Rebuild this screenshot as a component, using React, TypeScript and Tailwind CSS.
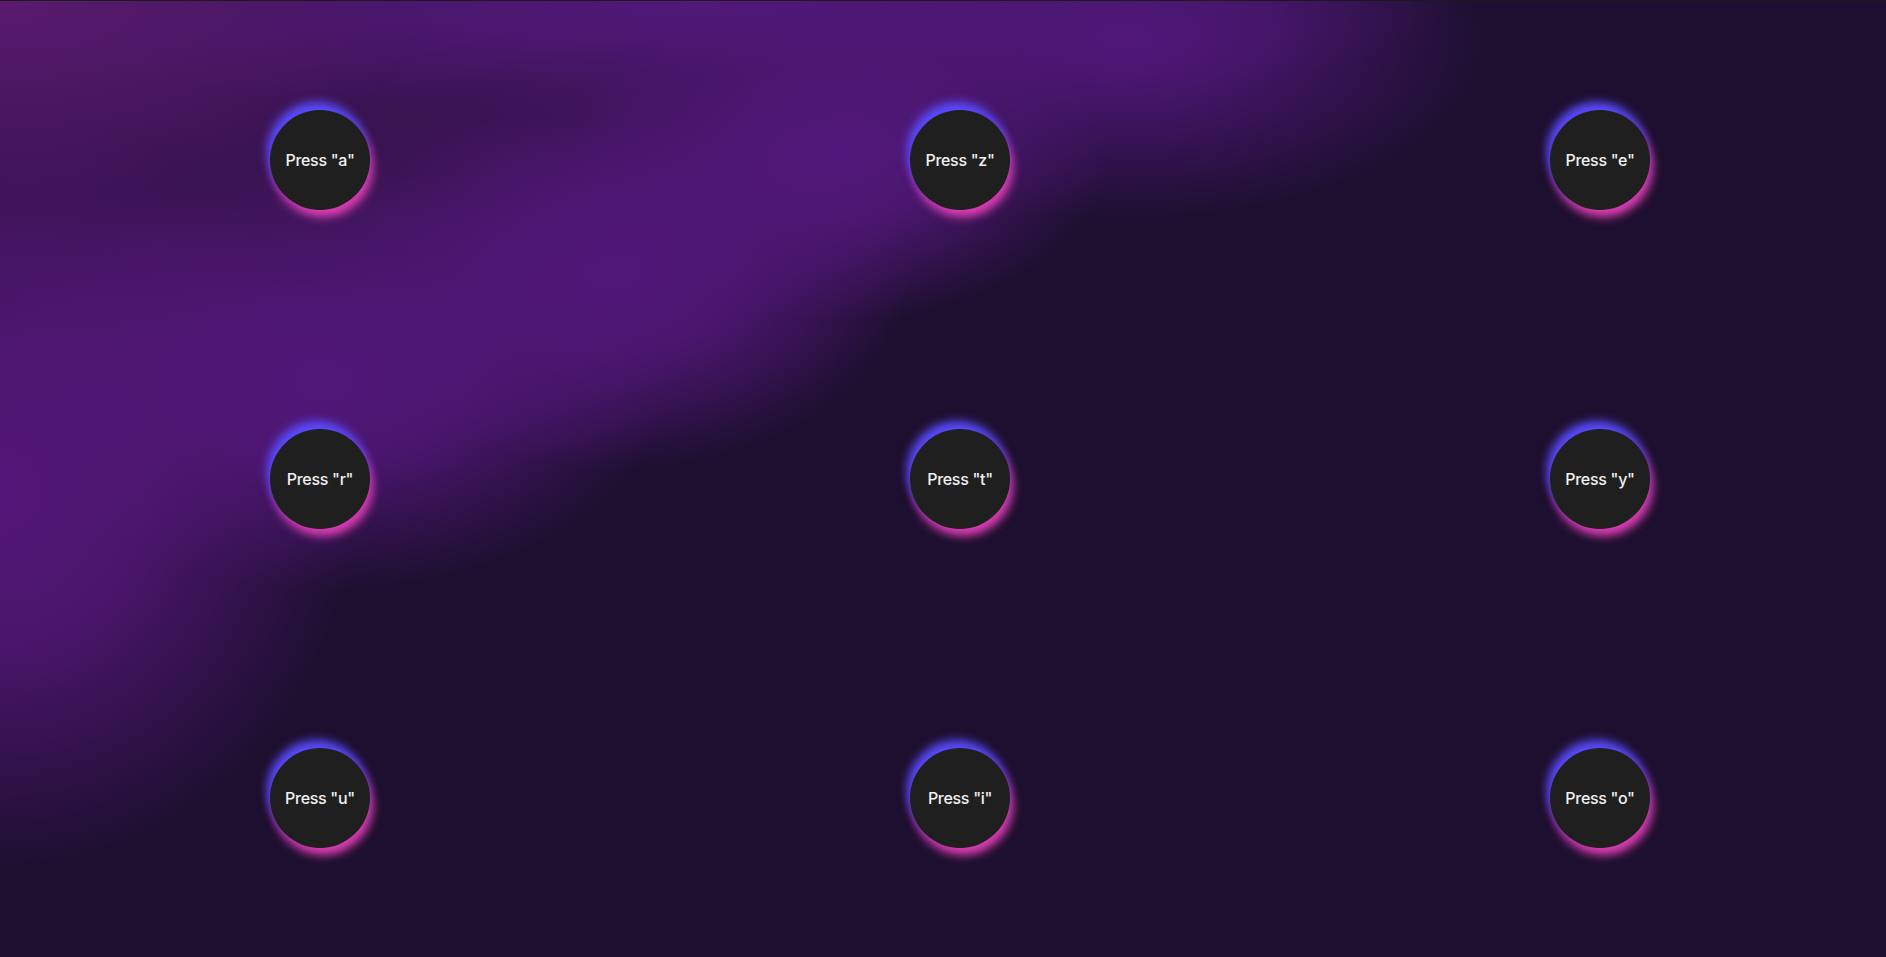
const keys = ['a', 'z', 'e', 'r', 't', 'y', 'u', 'i', 'o'];

function KeyPad({ k }: { k: string }) {
  return (
    <div className="flex items-center justify-center">
      <button className="size-[100px] rounded-full bg-[#1f1f1f] text-[#f2f2f2] text-[16px] font-medium tracking-[-0.3px] shadow-[-3px_-8px_10px_#5a4bff,3px_7px_10px_#e23fb6]">
        Press "{k}"
      </button>
    </div>
  );
}

export default function App() {
  return (
    <div
      className="h-screen w-full overflow-hidden border-t border-[#1a1a1a] bg-[#1d0f2f] bg-[image:radial-gradient(ellipse_420px_200px_at_0px_0px,#5a1a70_0%,#5a1a70aa_40%,transparent_100%),radial-gradient(ellipse_760px_120px_at_700px_0px,#52187a_0%,#52187acc_35%,transparent_100%),radial-gradient(ellipse_360px_380px_at_0px_490px,#55177a_0%,#55177acc_40%,transparent_100%),radial-gradient(ellipse_340px_210px_at_330px_380px,#52177a_0%,#52177acc_40%,transparent_100%),radial-gradient(ellipse_290px_200px_at_620px_270px,#52177a_0%,#52177acc_40%,transparent_100%),radial-gradient(ellipse_270px_170px_at_840px_150px,#54187c_0%,#54187ccc_40%,transparent_100%),radial-gradient(ellipse_360px_180px_at_1130px_40px,#50177a_0%,#50177aaa_40%,transparent_100%),radial-gradient(ellipse_700px_320px_at_300px_170px,#3b1454_0%,#3b1454cc_50%,transparent_100%)]"
      style={{ fontFamily: 'Inter, "Liberation Sans", sans-serif' }}
    >
      <div className="grid grid-cols-[repeat(3,640px)] grid-rows-3 h-full">
        {keys.map((k) => (
          <KeyPad key={k} k={k} />
        ))}
      </div>
    </div>
  );
}
